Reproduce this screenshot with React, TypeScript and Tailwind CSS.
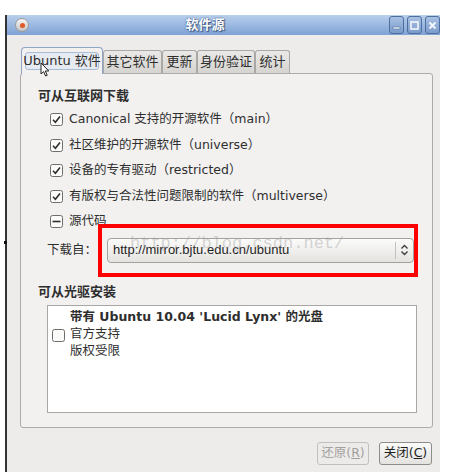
import React from "react";

const font = "font-['DejaVu_Sans','Noto_Sans_CJK_SC',sans-serif]";

function Check({ on, mixed }: { on?: boolean; mixed?: boolean }) {
    return (
        <svg width="13" height="13" viewBox="0 0 13 13" className="shrink-0">
            <rect x="0.5" y="0.5" width="12" height="12" rx="2" fill="#fbfbfa" stroke="#6f6d6a" />
            {on && <path d="M3 6.8 L5.4 9.2 L10 3.6" fill="none" stroke="#2e2e2e" strokeWidth="1.6" />}
            {mixed && <path d="M2.5 6.5 H10.5" stroke="#2e2e2e" strokeWidth="1.6" />}
        </svg>
    );
}

function WinButton({ kind }: { kind: "min" | "max" | "close" }) {
    return (
        <div className="w-[15px] h-[18px] rounded-[3px] border border-[#4e6f9d] bg-gradient-to-b from-[#a9c1e3] to-[#7b9ccc] flex items-center justify-center">
            <svg width="9" height="9" viewBox="0 0 9 9">
                {kind === "min" && <rect x="1" y="6" width="7" height="2" fill="#f4f7fb" stroke="#4e6f9d" strokeWidth="0.6" />}
                {kind === "max" && <rect x="1" y="1" width="7" height="7" fill="none" stroke="#f4f7fb" strokeWidth="1.6" />}
                {kind === "close" && <path d="M1.5 1.5 L7.5 7.5 M7.5 1.5 L1.5 7.5" stroke="#f4f7fb" strokeWidth="2" />}
            </svg>
        </div>
    );
}

const rows: { on?: boolean; mixed?: boolean; label: string }[] = [
    { on: true, label: "Canonical 支持的开源软件（main）" },
    { on: true, label: "社区维护的开源软件（universe）" },
    { on: true, label: "设备的专有驱动（restricted）" },
    { on: true, label: "有版权与合法性问题限制的软件（multiverse）" },
    { mixed: true, label: "源代码" },
];

const tabs = [
    { label: "其它软件", w: "w-[59px]" },
    { label: "更新", w: "w-[35px]" },
    { label: "身份验证", w: "w-[58px]" },
    { label: "统计", w: "w-[35px]" },
];

function App() {
    return (
        <div className={`w-[452px] h-[472px] bg-white pt-[15px] pl-[5px] overflow-hidden relative ${font} text-[12.5px] text-[#2e2e2e]`}>
            <div className="w-[435px] h-[457px] flex flex-col border-l-2 border-[#333] bg-[#edeceb]">
                {/* title bar */}
                <div className="h-[20px] flex items-center pl-[8px] bg-gradient-to-b from-[#b9cfec] to-[#7fa2d4]">
                    <div className="w-[14px] h-[14px] rounded-full bg-gradient-to-b from-[#f6f6f6] to-[#c4c4c4] border border-[#9a9a9a] flex items-center justify-center">
                        <div className="w-[5px] h-[5px] rounded-full bg-[#e0582a]" />
                    </div>
                    <div className="flex-1 text-center text-white font-bold text-[13px] [text-shadow:0_0_2px_#34527f,1px_1px_1px_#34527f] pr-[8px]">
                        软件源
                    </div>
                    <div className="flex gap-[3px] items-center">
                        <WinButton kind="min" />
                        <WinButton kind="max" />
                        <WinButton kind="close" />
                    </div>
                </div>

                <div className="pl-[13px] pr-[1px] pt-[12px]">
                    {/* tabs */}
                    <div className="flex items-end h-[26px] pl-[1px] relative z-10 text-[13px]">
                        <div className="w-[82px] h-[27px] -mb-[1px] rounded-t-[4px] border border-b-0 border-[#8ea5c6] bg-[#f2f1f0] px-[3px] pt-[4px]">
                            <div className="h-[18px] rounded-[3px] border border-[#a9bcd6] bg-[#e6ebf2] flex items-center justify-center whitespace-nowrap">
                                Ubuntu 软件
                            </div>
                        </div>
                        {tabs.map((t) => (
                            <div
                                key={t.label}
                                className={`${t.w} h-[23px] rounded-t-[3px] border border-b-0 border-[#aaa8a4] bg-gradient-to-b from-[#eae9e7] to-[#d6d4d0] flex items-center justify-center whitespace-nowrap`}
                            >
                                {t.label}
                            </div>
                        ))}
                    </div>

                    {/* notebook */}
                    <div className="w-[413px] h-[355px] rounded-[3px] border border-[#aeaca8] bg-[#f2f1f0] pl-[17px] pt-[12px]">
                        <div className="h-[20px] flex items-center font-bold text-[13px]">可从互联网下载</div>
                        <div className="pl-[12px] pt-[1px]">
                            {rows.map((r) => (
                                <div key={r.label} className="h-[25.5px] flex items-center gap-[6px] whitespace-nowrap">
                                    <Check on={r.on} mixed={r.mixed} />
                                    <span>{r.label}</span>
                                </div>
                            ))}
                        </div>

                        <div className="flex items-center mt-[3px] pl-[9px]">
                            <span className="w-[60px]">下载自：</span>
                            <div className="w-[307px] h-[25px] rounded-[4px] border border-[#a3a19d] bg-gradient-to-b from-[#fbfbfa] to-[#e4e3e0] flex items-center">
                                <span className="flex-1 pl-[5px] text-[#1f1f1f] text-[13px] font-['Liberation_Sans',sans-serif]">
                                    http://mirror.bjtu.edu.cn/ubuntu
                                </span>
                                <div className="w-[1px] h-[17px] bg-[#c3c1bd]" />
                                <svg width="17" height="14" viewBox="0 0 17 14">
                                    <path d="M5.5 5.5 L8.5 2.5 L11.5 5.5 M5.5 8.5 L8.5 11.5 L11.5 8.5" fill="none" stroke="#3a3a3a" strokeWidth="1.3" />
                                </svg>
                            </div>
                        </div>

                        <div className="h-[18px] mt-[20px] flex items-center font-bold text-[13px]">可从光驱安装</div>
                        <div className="mt-[4px] ml-[9px] w-[370px] h-[108px] border border-[#a9a7a3] bg-white pt-[2px] pl-[4px] flex items-start gap-[5px]">
                            <div className="mt-[21px]">
                                <Check />
                            </div>
                            <div className="leading-[17px]">
                                <div className="font-bold">带有 Ubuntu 10.04 'Lucid Lynx' 的光盘</div>
                                <div>官方支持</div>
                                <div>版权受限</div>
                            </div>
                        </div>
                    </div>

                    {/* buttons */}
                    <div className="flex justify-end gap-[10px] pr-[7px] mt-[14px]">
                        <div className="w-[52px] h-[23px] rounded-[3px] border border-[#c2c0bc] bg-[#ecebe9] text-[#a3a19e] flex items-center justify-center">
                            还原(<span className="underline">R</span>)
                        </div>
                        <div className="w-[53px] h-[23px] rounded-[3px] border border-[#8e8c88] bg-gradient-to-b from-[#fafaf9] to-[#e3e2df] flex items-center justify-center text-[#1f1f1f]">
                            关闭(<span className="underline">C</span>)
                        </div>
                    </div>
                </div>
            </div>

            {/* red annotation box */}
            <div className="absolute left-[98px] top-[224px] w-[320px] h-[53px] border-[4px] border-[#ff0000]" />

            {/* watermark */}
            <div className="absolute left-[130px] top-[234px] text-[17px] leading-[20px] text-[#9a9a9a]/40 font-['Liberation_Mono',monospace] pointer-events-none">
                http://blog.csdn.net/
            </div>

            {/* mouse cursor */}
            <svg className="absolute left-[40px] top-[62px] z-20" width="10" height="15" viewBox="0 0 10 15">
                <path d="M1 1 L1 12 L3.6 9.6 L5.6 14 L7.2 13.3 L5.3 9 L8.8 9 Z" fill="#fff" stroke="#222" strokeWidth="1" />
            </svg>

            <div className="absolute left-[4px] top-[241px] w-[3px] h-[3px] bg-[#111]" />
        </div>
    );
}

export default App;
